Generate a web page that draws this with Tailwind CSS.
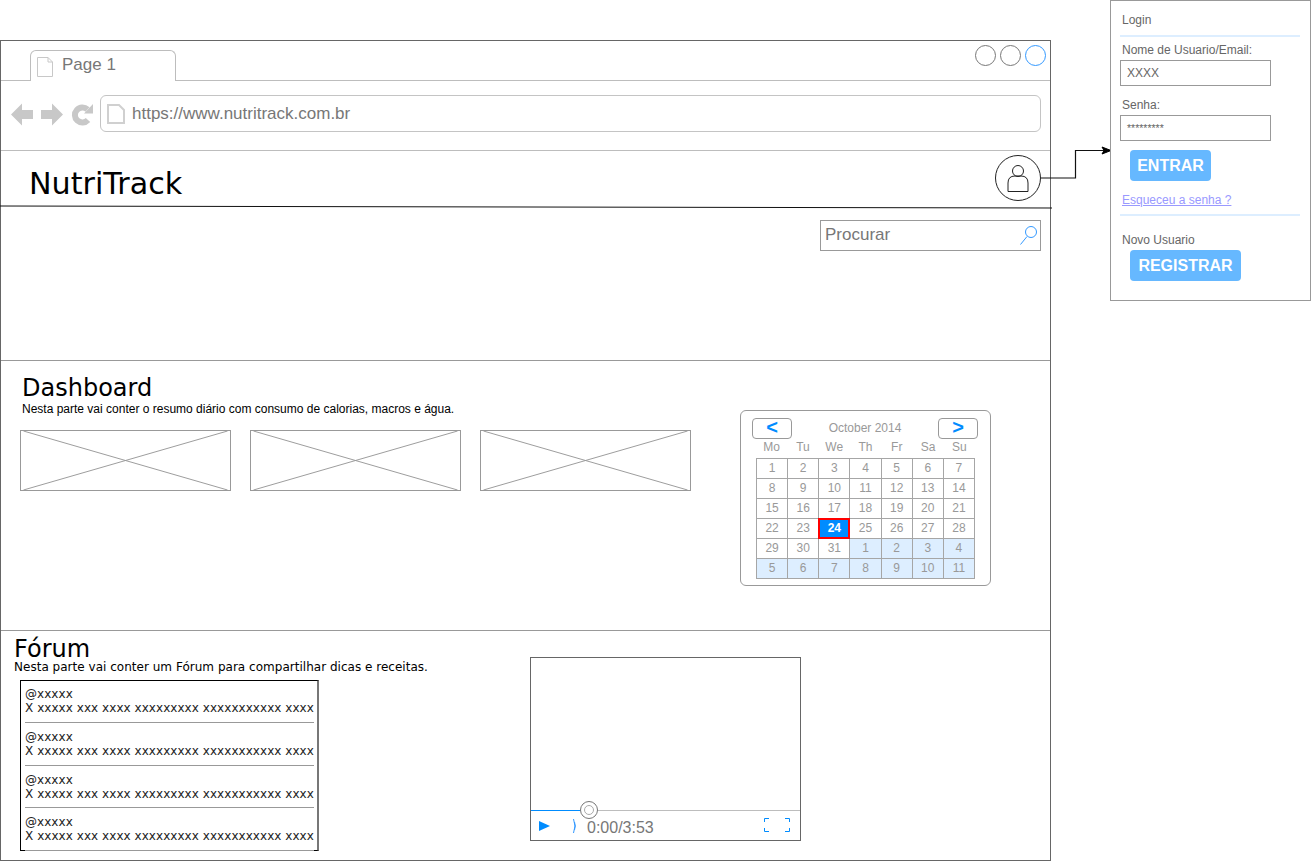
<!doctype html>
<html>

<head>
  <meta charset="UTF-8">
  <meta name="viewport" content="width=device-width, initial-scale=1.0">
  <script src="https://cdn.jsdelivr.net/npm/@tailwindcss/browser@4"></script>
</head>

<body class="bg-white font-['Liberation_Sans',sans-serif]">
  <div class="relative w-[1311px] h-[861px] overflow-hidden">

    <!-- browser window -->
    <div class="absolute left-0 top-[40px] w-[1051px] h-[821px] border border-[#666] flex flex-col">

      <!-- tab bar -->
      <div class="h-[40px] border-b border-[#bdbdbd] flex items-end justify-between pl-[29px] pr-[4px] shrink-0">
        <div class="w-[146px] h-[31px] -mb-px border border-b-0 border-[#bdbdbd] rounded-t-[6px] bg-white flex items-center pl-[6px] gap-[9px]">
          <svg width="16" height="20" viewBox="0 0 16 20" class="mt-[2px]">
            <path d="M.5.5H11L15.5 5V19.5H.5Z M11 .5V5H15.5" fill="none" stroke="#c8c8c8" />
          </svg>
          <span class="text-[17px] text-[#777] leading-none -mt-[4px]">Page 1</span>
        </div>
        <div class="flex gap-[4px] self-start mt-[4px]">
          <div class="size-[21px] rounded-full border border-[#777]"></div>
          <div class="size-[21px] rounded-full border border-[#777]"></div>
          <div class="size-[21px] rounded-full border border-[#3399ff]"></div>
        </div>
      </div>

      <!-- address bar -->
      <div class="h-[70px] border-b border-[#bdbdbd] flex items-start pt-[14px] pl-[10px] pr-[9px] shrink-0">
        <svg width="84" height="26" viewBox="0 0 84 26" class="shrink-0 mt-[7px]">
          <path d="M0 12.500 11 1.500V8H22V17H11V23.500Z" fill="#c8c8c8" />
          <path d="M52 12.500 41 1.500V8H30V17H41V23.500Z" fill="#c8c8c8" />
          <path d="M76.500 7.500A7.500 7.500 0 1 0 77 18" fill="none" stroke="#c8c8c8" stroke-width="6" />
          <path d="M82 2V11.500H73Z" fill="#c8c8c8" />
        </svg>
        <div class="flex-1 h-[37px] ml-[5px] border border-[#c4c4c4] rounded-[6px] flex items-center pl-[6px] gap-[7px]">
          <svg width="18" height="20" viewBox="0 0 18 20">
            <path d="M1 1H12L17 6V19H1Z" fill="#fff" stroke="#d0d0d0" stroke-width="2" />
          </svg>
          <span class="text-[17px] text-[#777] leading-none">https://www.nutritrack.com.br</span>
        </div>
      </div>

      <!-- header -->
      <div class="h-[56px] flex items-center justify-between pl-[28px] pr-[9px] shrink-0">
        <span class="font-['DejaVu_Sans',sans-serif] text-[30.2px] text-black leading-none mt-[10px]">NutriTrack</span>
        <div class="size-[46px] -mt-[2px] rounded-full border border-[#222] flex items-center justify-center">
          <svg width="22" height="27" viewBox="0 0 22 27" class="-ml-[1px]">
            <circle cx="11" cy="6" r="5.500" fill="none" stroke="#222" />
            <path d="M1 26.500V18Q1 11 8 11H14Q21 11 21 18V26.500Z" fill="none" stroke="#222" />
          </svg>
        </div>
      </div>

      <!-- search -->
      <div class="h-[154px] border-b border-[#999] pt-[13px] pr-[9px] flex justify-end shrink-0">
        <div class="w-[221px] h-[31px] border border-[#999] flex items-center justify-between pl-[4px] pr-[3px]">
          <span class="text-[17px] text-[#777] leading-none -mt-[2px]">Procurar</span>
          <svg width="17" height="19" viewBox="0 0 17 19">
            <circle cx="11" cy="6" r="5.500" fill="none" stroke="#3399ff" />
            <path d="M7 10.500 .5 18.500" fill="none" stroke="#3399ff" />
          </svg>
        </div>
      </div>

      <!-- dashboard -->
      <div class="h-[270px] border-b border-[#999] pl-[19px] flex shrink-0">
        <div class="w-[720px] shrink-0">
          <h2 class="font-['DejaVu_Sans',sans-serif] text-[24px] text-black leading-none mt-[15px] ml-[2px]">Dashboard</h2>
          <p class="text-[12px] text-black leading-none mt-[3px] ml-[2px]">Nesta parte vai conter o resumo diário com consumo de calorias, macros e água.</p>
          <div class="flex gap-[19px] mt-[15px]">
            <svg width="211" height="61" viewBox="0 0 211 61" class="border border-[#999]"><path d="M0 0 211 61M0 61 211 0" stroke="#999" /></svg>
            <svg width="211" height="61" viewBox="0 0 211 61" class="border border-[#999]"><path d="M0 0 211 61M0 61 211 0" stroke="#999" /></svg>
            <svg width="211" height="61" viewBox="0 0 211 61" class="border border-[#999]"><path d="M0 0 211 61M0 61 211 0" stroke="#999" /></svg>
          </div>
        </div>

        <!-- calendar -->
        <div class="w-[251px] h-[176px] mt-[49px] border border-[#999] rounded-[6px] text-[12px] text-[#999] pl-[11px] pr-[12px] pt-[7px] relative">
          <div class="flex items-center justify-between h-[21px]">
            <div class="w-[40px] h-[21px] border border-[#999] rounded-[4px] flex items-center justify-center text-[#008cff] font-bold text-[20px] leading-none -mt-[1px]"><span class="-mt-[3px]">&lt;</span></div>
            <span class="leading-none -mt-[2px]">October 2014</span>
            <div class="w-[40px] h-[21px] border border-[#999] rounded-[4px] flex items-center justify-center text-[#008cff] font-bold text-[20px] leading-none -mt-[1px]"><span class="-mt-[3px]">&gt;</span></div>
          </div>
          <div class="ml-[4px] w-[219px]">
            <div class="grid grid-cols-7 text-center h-[19px] items-start leading-none pt-[2px]">
              <span>Mo</span><span>Tu</span><span>We</span><span>Th</span><span>Fr</span><span>Sa</span><span>Su</span>
            </div>
            <div class="grid grid-cols-7 gap-px p-px bg-[#a6a6a6] auto-rows-[19px] text-center leading-[19px]">
              <div class="bg-white">1</div><div class="bg-white">2</div><div class="bg-white">3</div><div class="bg-white">4</div><div class="bg-white">5</div><div class="bg-white">6</div><div class="bg-white">7</div>
              <div class="bg-white">8</div><div class="bg-white">9</div><div class="bg-white">10</div><div class="bg-white">11</div><div class="bg-white">12</div><div class="bg-white">13</div><div class="bg-white">14</div>
              <div class="bg-white">15</div><div class="bg-white">16</div><div class="bg-white">17</div><div class="bg-white">18</div><div class="bg-white">19</div><div class="bg-white">20</div><div class="bg-white">21</div>
              <div class="bg-white">22</div><div class="bg-white">23</div>
              <div class="bg-[#008cff] text-white font-bold outline-2 outline-[#ff0000] -outline-offset-1 relative">24</div>
              <div class="bg-white">25</div><div class="bg-white">26</div><div class="bg-white">27</div><div class="bg-white">28</div>
              <div class="bg-white">29</div><div class="bg-white">30</div><div class="bg-white">31</div><div class="bg-[#ddeeff]">1</div><div class="bg-[#ddeeff]">2</div><div class="bg-[#ddeeff]">3</div><div class="bg-[#ddeeff]">4</div>
              <div class="bg-[#ddeeff]">5</div><div class="bg-[#ddeeff]">6</div><div class="bg-[#ddeeff]">7</div><div class="bg-[#ddeeff]">8</div><div class="bg-[#ddeeff]">9</div><div class="bg-[#ddeeff]">10</div><div class="bg-[#ddeeff]">11</div>
            </div>
          </div>
        </div>
      </div>

      <!-- forum -->
      <div class="flex-1 pl-[13px] flex min-h-0">
        <div class="w-[516px] shrink-0">
          <h2 class="font-['DejaVu_Sans',sans-serif] text-[24px] text-black leading-none mt-[6px]">Fórum</h2>
          <p class="font-['DejaVu_Sans',sans-serif] text-[12px] tracking-[0.02px] text-black leading-none">Nesta parte vai conter um Fórum para compartilhar dicas e receitas.</p>
          <div class="ml-[6px] mt-[7px] w-[299px] h-[171px] border border-black border-r-2 border-r-[#777] pl-[4px] pr-[3px] pt-[6px] font-['DejaVu_Sans',sans-serif] text-[12px] tracking-[0.05px] text-[#222] leading-[14px]">
            <div class="h-[36px] border-b border-[#999]"><p>@xxxxx</p><p class="whitespace-nowrap">X xxxxx xxx xxxx xxxxxxxxx xxxxxxxxxxx xxxx</p></div>
            <div class="h-[43px] pt-[7px] border-b border-[#999]"><p>@xxxxx</p><p class="whitespace-nowrap">X xxxxx xxx xxxx xxxxxxxxx xxxxxxxxxxx xxxx</p></div>
            <div class="h-[42px] pt-[7px] border-b border-[#999]"><p>@xxxxx</p><p class="whitespace-nowrap">X xxxxx xxx xxxx xxxxxxxxx xxxxxxxxxxx xxxx</p></div>
            <div class="h-[43px] pt-[7px] border-b border-[#999]"><p>@xxxxx</p><p class="whitespace-nowrap">X xxxxx xxx xxxx xxxxxxxxx xxxxxxxxxxx xxxx</p></div>
          </div>
        </div>

        <!-- video -->
        <div class="w-[271px] h-[184px] mt-[26px] border border-[#666] relative">
          <div class="absolute left-0 right-0 top-[152px] h-px bg-[#bdbdbd]"></div>
          <div class="absolute left-0 w-[52px] top-[152px] h-px bg-[#008cff]"></div>
          <div class="absolute left-[49px] top-[143px] size-[18px] rounded-full border border-[#777] bg-white flex items-center justify-center">
            <div class="size-[10px] rounded-full border border-[#aaa]"></div>
          </div>
          <div class="absolute left-0 right-0 top-[153px] bottom-0 flex items-center pl-[8px]">
            <svg width="11" height="10" viewBox="0 0 11 10" class="shrink-0"><path d="M0 0 11 5 0 10Z" fill="#008cff" /></svg>
            <svg width="5" height="16" viewBox="0 0 5 16" class="ml-[22px] shrink-0"><path d="M1.500 1Q4.500 8 1.500 15M2.500 4Q4 8 2.500 12" fill="none" stroke="#3399ff" /></svg>
            <span class="ml-[10px] text-[16px] text-[#777] leading-none mt-[4px]">0:00/3:53</span>
            <svg width="26" height="14" viewBox="0 0 26 14" class="ml-[auto] mr-[10px] -mt-[1px]"><path d="M5 .500H.5V4M.5 10V13.500H5M21 .500H25.500V4M25.500 10V13.500H21" fill="none" stroke="#008cff" /></svg>
          </div>
        </div>
      </div>
    </div>

    <!-- slanted rule under the header, connector -->
    <svg width="1311" height="861" viewBox="0 0 1311 861" class="absolute inset-0 pointer-events-none">
      <path d="M0 206 1052 208" fill="none" stroke="#111" />
      <path d="M1041 178H1075.500V150.500H1104" fill="none" stroke="#111" stroke-width="1.200" />
      <path d="M1111 150.500 1102 147 1104 150.500 1102 154Z" fill="#000" stroke="#000" />
    </svg>

    <!-- login panel -->
    <div class="absolute left-[1110px] top-0 w-[201px] h-[301px] border border-[#999] px-[9px] text-[12px] text-[#666] leading-none bg-white">
      <p class="mt-[13px] ml-[2px]">Login</p>
      <div class="h-[2px] bg-[#ddeeff] mt-[9px] mr-[1px]"></div>
      <p class="mt-[7px] ml-[2px]">Nome de Usuario/Email:</p>
      <div class="w-[151px] h-[26px] border border-[#999] mt-[4px] flex items-center pl-[6px]">XXXX</div>
      <p class="mt-[13px] ml-[2px]">Senha:</p>
      <div class="w-[151px] h-[26px] border border-[#999] mt-[4px] flex items-center pl-[6px] text-[10.5px]"><span class="mt-[1px]">*********</span></div>
      <div class="w-[81px] h-[31px] bg-[#66b8ff] rounded-[4px] mt-[9px] ml-[10px] flex items-center justify-center text-white font-bold text-[16px]">ENTRAR</div>
      <a class="block mt-[13px] ml-[2px] text-[#9999ff] underline">Esqueceu a senha ?</a>
      <div class="h-[2px] bg-[#ddeeff] mt-[8px] mr-[1px]"></div>
      <p class="mt-[18px] ml-[2px]">Novo Usuario</p>
      <div class="w-[111px] h-[31px] bg-[#66b8ff] rounded-[4px] mt-[4px] ml-[10px] flex items-center justify-center text-white font-bold text-[16px]">REGISTRAR</div>
    </div>
  </div>
</body>

</html>
